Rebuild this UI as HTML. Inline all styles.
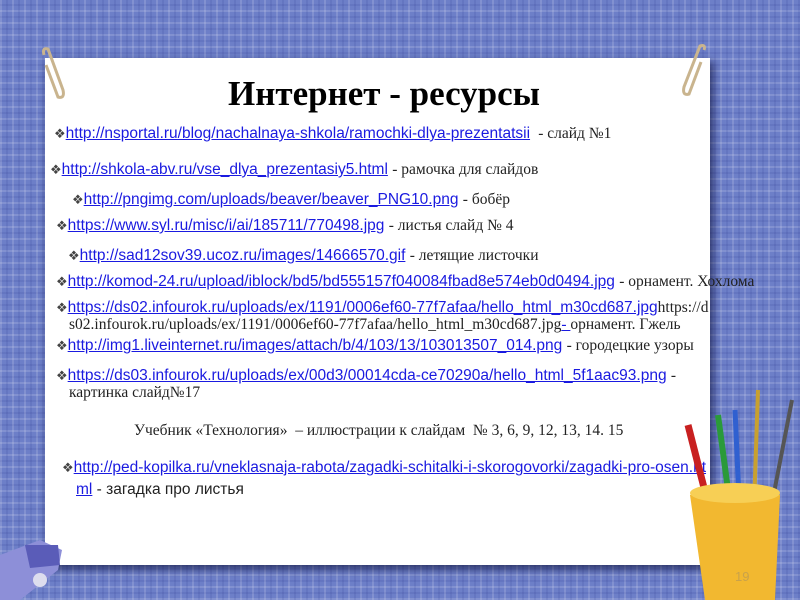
<!DOCTYPE html>
<html><head><meta charset="utf-8"><style>
body{margin:0;width:800px;height:600px;overflow:hidden;position:relative;
background:
repeating-linear-gradient(90deg,rgba(255,255,255,.14) 0 2px,transparent 2px 6px,rgba(40,50,140,.12) 6px 8px,transparent 8px 12px),
repeating-linear-gradient(0deg,rgba(255,255,255,.14) 0 2px,transparent 2px 6px,rgba(40,50,140,.12) 6px 8px,transparent 8px 12px),
#6d7fc8;font-family:"Liberation Sans",sans-serif;}
.paper{position:absolute;left:45px;top:58px;width:665px;height:507px;background:#fff;box-shadow:3px 4px 8px rgba(0,0,40,.6);}
.t{position:absolute;white-space:nowrap;font-size:15.5px;color:#222;}
.t a{color:#1a1ae0;text-decoration:underline;}
.s{font-family:"Liberation Serif",serif;font-size:15.5px;}
.d{color:#444;font-size:13px;}
h1{position:absolute;left:0;width:768px;text-align:center;top:74px;margin:0;font:bold 35px "Liberation Serif",serif;color:#000;}
</style></head><body>
<div class="paper"></div>
<svg style="position:absolute;left:38px;top:45px" width="30" height="60"><path d="M6 10 Q4 2 10 4 L25 45 Q27 54 20 52 L8 20" fill="none" stroke="#c9b48e" stroke-width="3"/></svg>
<svg style="position:absolute;left:680px;top:42px" width="30" height="60"><path d="M24 8 Q26 2 20 4 L4 45 Q2 54 9 52 L21 20" fill="none" stroke="#c9b48e" stroke-width="3"/></svg>
<h1>Интернет - ресурсы</h1>
<div class="t" style="left:54px;top:125px"><span class="d">❖</span><a>http://nsportal.ru/blog/nachalnaya-shkola/ramochki-dlya-prezentatsii</a> <span class="s">&nbsp;- слайд №1</span></div>
<div class="t" style="left:50px;top:161px"><span class="d">❖</span><a>http://shkola-abv.ru/vse_dlya_prezentasiy5.html</a> <span class="s">- рамочка для слайдов</span></div>
<div class="t" style="left:72px;top:191px"><span class="d">❖</span><a>http://pngimg.com/uploads/beaver/beaver_PNG10.png</a> <span class="s">- бобёр</span></div>
<div class="t" style="left:56px;top:217px"><span class="d">❖</span><a>https://www.syl.ru/misc/i/ai/185711/770498.jpg</a> <span class="s">- листья слайд № 4</span></div>
<div class="t" style="left:68px;top:247px"><span class="d">❖</span><a>http://sad12sov39.ucoz.ru/images/14666570.gif</a> <span class="s">- летящие листочки</span></div>
<div class="t" style="left:56px;top:273px"><span class="d">❖</span><a>http://komod-24.ru/upload/iblock/bd5/bd555157f040084fbad8e574eb0d0494.jpg</a> <span class="s">- орнамент. Хохлома</span></div>
<div class="t" style="left:56px;top:299px"><span class="d">❖</span><a>https://ds02.infourok.ru/uploads/ex/1191/0006ef60-77f7afaa/hello_html_m30cd687.jpg</a><span class="s">https://d</span></div>
<div class="t s" style="left:69px;top:316px">s02.infourok.ru/uploads/ex/1191/0006ef60-77f7afaa/hello_html_m30cd687.jpg<a>- </a>орнамент. Гжель</div>
<div class="t" style="left:56px;top:337px"><span class="d">❖</span><a>http://img1.liveinternet.ru/images/attach/b/4/103/13/103013507_014.png</a> <span class="s">- городецкие узоры</span></div>
<div class="t" style="left:56px;top:367px"><span class="d">❖</span><a>https://ds03.infourok.ru/uploads/ex/00d3/00014cda-ce70290a/hello_html_5f1aac93.png</a> <span class="s">-</span></div>
<div class="t s" style="left:69px;top:384px">картинка слайд№17</div>
<div class="t s" style="left:134px;top:422px">Учебник «Технология» &nbsp;– иллюстрации к слайдам &nbsp;№ 3, 6, 9, 12, 13, 14. 15</div>
<div class="t" style="left:62px;top:459px"><span class="d">❖</span><a>http://ped-kopilka.ru/vneklasnaja-rabota/zagadki-schitalki-i-skorogovorki/zagadki-pro-osen.ht</a></div>
<div class="t" style="left:76px;top:481px"><a>ml</a> - загадка про листья</div>
<svg style="position:absolute;left:680px;top:385px" width="120" height="215">
<path d="M8 40 L45 185" stroke="#c82020" stroke-width="7"/>
<path d="M38 30 L58 180" stroke="#2a9a3a" stroke-width="6"/>
<path d="M55 25 L62 180" stroke="#3060d0" stroke-width="5"/>
<path d="M78 5 L72 180" stroke="#c8a030" stroke-width="4"/>
<path d="M112 15 L80 180" stroke="#555" stroke-width="4"/>
<path d="M10 110 Q55 95 100 110 L95 215 L25 215 Z" fill="#f2b830"/>
<ellipse cx="55" cy="108" rx="45" ry="10" fill="#f7cf55"/>
<text x="55" y="196" font-size="13" fill="#c9a24a" font-family="Liberation Sans">19</text>
</svg>
<svg style="position:absolute;left:0;top:540px" width="65" height="60">
<path d="M0 15 L40 0 L62 10 L58 30 L20 60 L0 60 Z" fill="#8d8fd8"/>
<path d="M25 5 L58 5 L60 25 L30 28 Z" fill="#5a5cb8"/>
<circle cx="40" cy="40" r="7" fill="#dde"/>
</svg>
</body></html>
